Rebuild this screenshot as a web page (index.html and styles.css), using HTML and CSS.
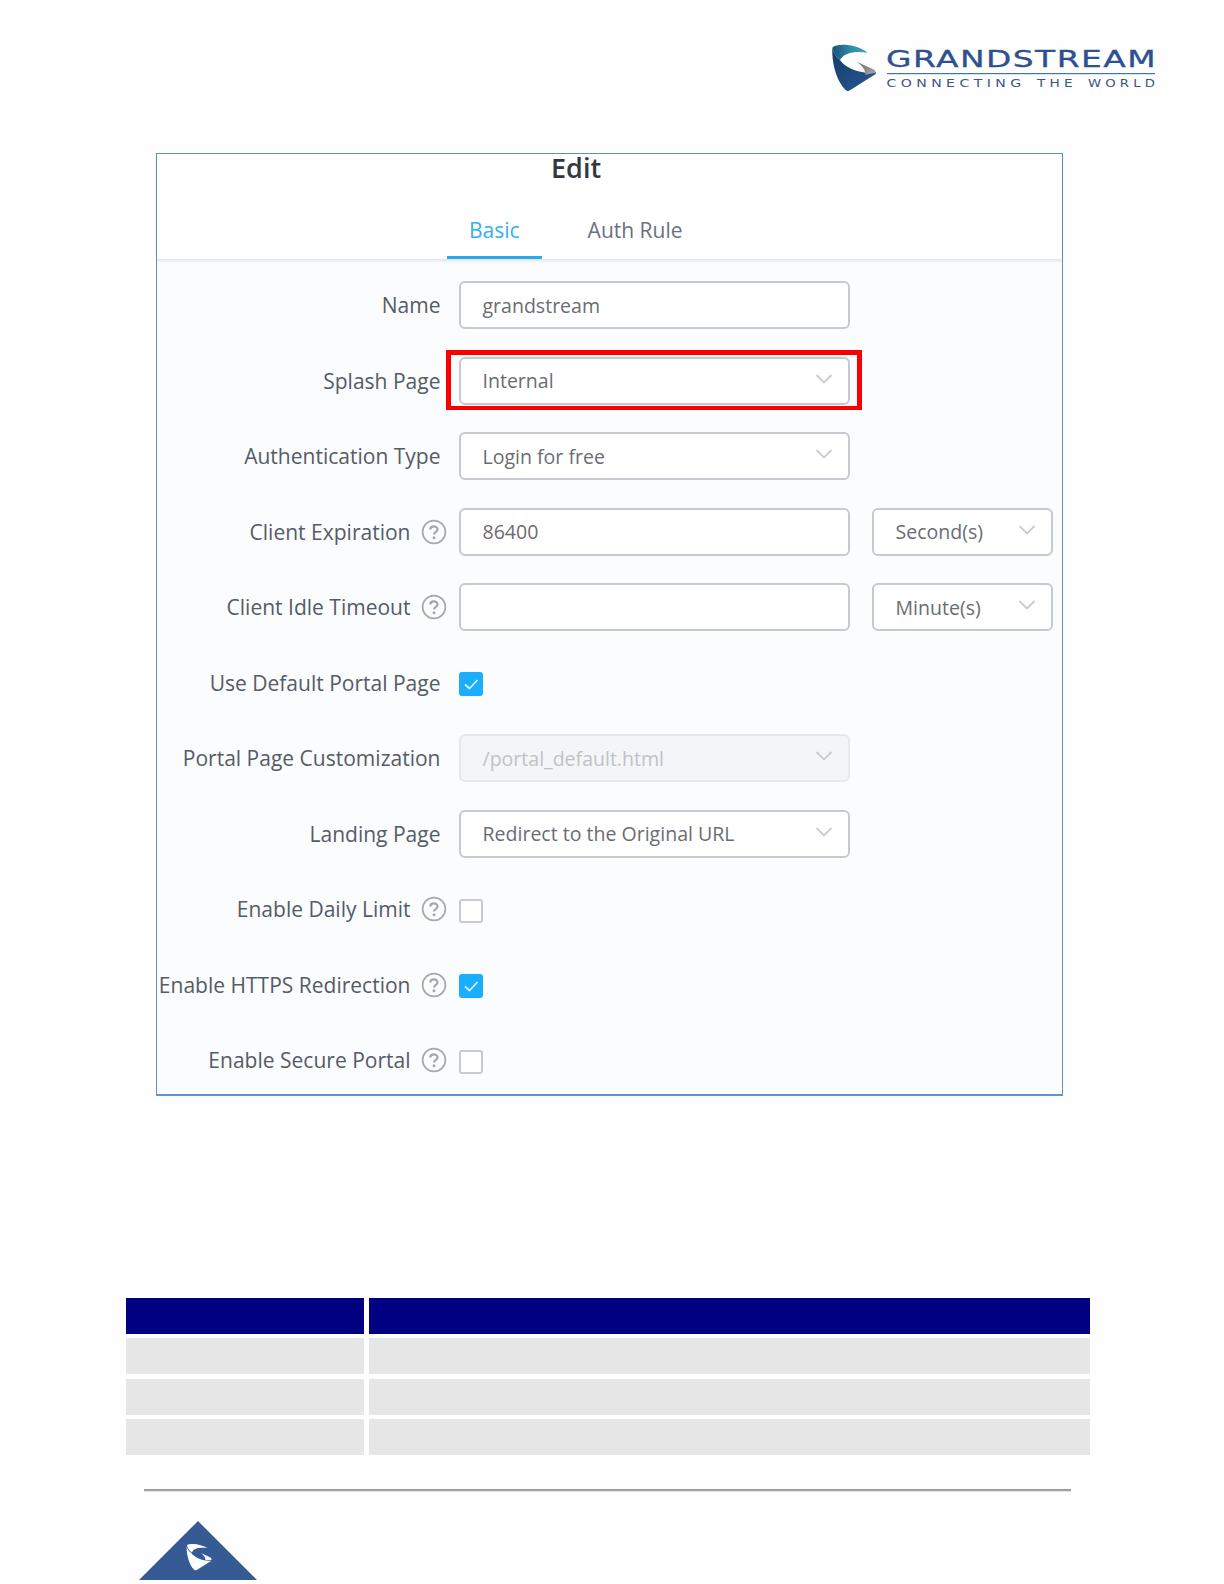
FILE: index.html
```html
<!DOCTYPE html>
<html lang="en">
<head>
  <meta charset="UTF-8" />
  <meta name="viewport" content="width=device-width, initial-scale=1.0"/>
  <title>Grandstream - Edit Portal Policy</title>
  <link rel="stylesheet" href="styles.css">
</head>
<body>
  <!-- shared icons -->
  <svg class="defs" width="0" height="0">
    <symbol id="chevron" viewBox="0 0 18 10">
      <path d="M1.5 1L9 8.5L16.5 1" fill="none" stroke="currentColor" stroke-width="1.8"/>
    </symbol>
    <symbol id="check" viewBox="0 0 24 24">
      <path d="M6 12.5L10.5 16.5L18.5 8" fill="none" stroke="currentColor" stroke-width="1.7"/>
    </symbol>
    <symbol id="help" viewBox="0 0 26 26">
      <circle cx="13" cy="13" r="11.4" fill="none" stroke="currentColor" stroke-width="1.7"/>
      <path d="M9.3 10.6C9.3 6.4 16.5 6.4 16.5 10.4C16.5 13 13 12.7 13 15.6" fill="none" stroke="currentColor" stroke-width="2.3"/>
      <circle cx="13" cy="18.7" r="1.5" fill="currentColor"/>
    </symbol>
  </svg>

  <header class="page-header">
    <svg class="logo" width="370" height="80" viewBox="0 0 370 80">
      <defs>
        <linearGradient id="teal" x1="0" y1="0" x2="1" y2="0">
          <stop offset="0" stop-color="#1f4f7c"/>
          <stop offset="0.5" stop-color="#2b8ba6"/>
          <stop offset="1" stop-color="#3fa9bb"/>
        </linearGradient>
        <linearGradient id="blue" x1="0" y1="0" x2="1" y2="1">
          <stop offset="0" stop-color="#163a66"/>
          <stop offset="1" stop-color="#265a97"/>
        </linearGradient>
        <linearGradient id="gray" x1="0" y1="0" x2="1" y2="1">
          <stop offset="0" stop-color="#666"/>
          <stop offset="1" stop-color="#aaa"/>
        </linearGradient>
      </defs>
      <g transform="scale(0.3333)">
        <path d="M67 53C82 38 142 43 173 68C134 62 101 69 90 90C78 80 70 68 67 53Z" fill="url(#teal)"/>
        <path d="M67 53C65 105 83 160 110 182Q115 184 121 180L196 133Q200 129 197 126C160 134 108 117 90 90C78 80 70 68 67 53Z" fill="url(#blue)"/>
        <path d="M140 95L193 119Q199 124 196 128L166 134C166 117 154 104 140 95Z" fill="url(#gray)"/>
      </g>
      <text class="brand" x="76" y="36.5" textLength="271" lengthAdjust="spacingAndGlyphs">GRANDSTREAM</text>
      <rect x="77" y="43" width="268" height="1.2" fill="#40779f"/>
      <g class="tagline">
        <text x="76.5" y="57" textLength="139" lengthAdjust="spacingAndGlyphs">CONNECTING</text>
        <text x="227" y="57" textLength="40" lengthAdjust="spacingAndGlyphs">THE</text>
        <text x="278" y="57" textLength="71" lengthAdjust="spacingAndGlyphs">WORLD</text>
      </g>
    </svg>
  </header>

  <main class="panel">
    <div class="panel-head">
      <h1>Edit</h1>
      <nav class="tabs">
        <a class="tab active">Basic</a>
        <a class="tab">Auth Rule</a>
      </nav>
    </div>

    <form class="form">
      <div class="row">
        <label>Name</label>
        <div class="field">grandstream</div>
      </div>
      <div class="row">
        <label>Splash Page</label>
        <div class="field highlight">Internal <svg class="chevron"><use href="#chevron"/></svg></div>
      </div>
      <div class="row">
        <label>Authentication Type</label>
        <div class="field">Login for free <svg class="chevron"><use href="#chevron"/></svg></div>
      </div>
      <div class="row">
        <label>Client Expiration <svg class="help"><use href="#help"/></svg></label>
        <div class="field">86400</div>
        <div class="field unit">Second(s) <svg class="chevron"><use href="#chevron"/></svg></div>
      </div>
      <div class="row">
        <label>Client Idle Timeout <svg class="help"><use href="#help"/></svg></label>
        <div class="field"></div>
        <div class="field unit">Minute(s) <svg class="chevron"><use href="#chevron"/></svg></div>
      </div>
      <div class="row">
        <label>Use Default Portal Page</label>
        <span class="checkbox checked"><svg><use href="#check"/></svg></span>
      </div>
      <div class="row">
        <label>Portal Page Customization</label>
        <div class="field disabled">/portal_default.html <svg class="chevron"><use href="#chevron"/></svg></div>
      </div>
      <div class="row">
        <label>Landing Page</label>
        <div class="field">Redirect to the Original URL <svg class="chevron"><use href="#chevron"/></svg></div>
      </div>
      <div class="row">
        <label>Enable Daily Limit <svg class="help"><use href="#help"/></svg></label>
        <span class="checkbox"></span>
      </div>
      <div class="row">
        <label>Enable HTTPS Redirection <svg class="help"><use href="#help"/></svg></label>
        <span class="checkbox checked"><svg><use href="#check"/></svg></span>
      </div>
      <div class="row">
        <label>Enable Secure Portal <svg class="help"><use href="#help"/></svg></label>
        <span class="checkbox"></span>
      </div>
    </form>
  </main>

  <div class="table">
    <div class="th"></div><div class="th"></div>
    <div class="td"></div><div class="td"></div>
    <div class="td"></div><div class="td"></div>
    <div class="td"></div><div class="td"></div>
  </div>

  <footer class="page-footer">
    <svg class="badge" width="118" height="59" viewBox="0 0 118 59">
      <path d="M59 0L118 59H0Z" fill="#365b94"/>
      <path d="M48 24C53 21.5 63 23.5 68.5 27C61 26 54 27 53 31.5C50 29.5 48.5 27 48 24Z" fill="#fff"/>
      <path d="M47.6 25.5C47.5 34 50 44 55.5 49Q57 49.6 58.5 48.5L72 40C64 40.5 55 36 52.3 32C49.5 30 48.2 28 47.6 25.5Z" fill="#fff"/>
      <path d="M62 32L71.5 36.5Q73.5 38 72 39.3L66.5 39.3C66.5 36 64.5 34 62 32Z" fill="#fff"/>
    </svg>
  </footer>
</body>
</html>
```
FILE: styles.css
```css
:root {
  --accent: #1baefc;
  --field-border: #c6c9d0;
  --label-color: #565b66;
  --field-color: #6a6d73;
  --panel-border: #5b95bd;
}

* {
  box-sizing: border-box;
}

body {
  margin: 0;
  height: 1584px;
  background: #fefefe;
  font-family: "Open Sans", sans-serif;
  display: flex;
  flex-direction: column;
  overflow: hidden;
}

.defs {
  position: absolute;
}

.page-header {
  height: 153px;
  padding: 30px 0 0 810px;
}

.logo {
  display: block;
}

.brand {
  font-family: "DejaVu Sans", sans-serif;
  font-size: 22.5px;
  letter-spacing: 1px;
  fill: #2d5190;
  stroke: #2d5190;
  stroke-width: 0.3px;
}

.tagline {
  font-family: "DejaVu Sans", sans-serif;
  font-size: 9.6px;
  letter-spacing: 3px;
  fill: #3c5580;
}

.panel {
  width: 907px;
  height: 943px;
  margin-left: 156px;
  border: 1px solid var(--panel-border);
  border-bottom: 2px solid #5f97cc;
  background: #fafcfe;
}

.panel-head {
  height: 106px;
  background: #fff;
  border-bottom: 1px solid #e3e5e9;
  box-shadow: 0 1px 3px rgba(0, 0, 0, 0.1);
}

h1 {
  margin: 0;
  padding-left: 394px;
  height: 49px;
  font-size: 27px;
  font-weight: 600;
  line-height: 28px;
  color: #333840;
}

.tabs {
  display: flex;
  gap: 24px;
  padding-left: 290px;
}

.tab {
  height: 56px;
  padding: 0 22px;
  font-size: 21px;
  line-height: 54px;
  color: #6b7080;
}

.tab.active {
  color: #35aef2;
  border-bottom: 3px solid #29aaec;
}

.form {
  padding-top: 7.6px;
}

.row {
  height: 75.5px;
  display: flex;
  align-items: center;
}

label {
  width: 283.5px;
  margin-right: 18.5px;
  display: flex;
  align-items: center;
  justify-content: flex-end;
  flex-shrink: 0;
  font-size: 21.02px;
  line-height: 30px;
  white-space: nowrap;
  color: var(--label-color);
}

.help {
  width: 26px;
  height: 26px;
  margin: 0 -6px 0 10px;
  color: #a6a8ab;
}

.field {
  position: relative;
  width: 391px;
  height: 48px;
  padding: 0 15px 0 21.5px;
  display: flex;
  align-items: center;
  justify-content: space-between;
  border: 2px solid var(--field-border);
  border-radius: 6px;
  background: #fff;
  font-size: 19.55px;
  white-space: nowrap;
  color: var(--field-color);
}

.field.unit {
  width: 181px;
  margin-left: 22px;
}

.field.disabled {
  background: #f4f5f8;
  border-color: #e6e8ec;
  color: #bfc2c8;
}

/* red marker around the splash page select */
.highlight::after {
  content: "";
  position: absolute;
  inset: -9px -14px -7px -15px;
  border: 5px solid #fb0000;
  border-bottom-width: 4px;
}

.chevron {
  width: 18px;
  height: 10px;
  margin-top: -4px;
  color: #c9cbd0;
}

.checkbox {
  width: 24px;
  height: 24px;
  margin-top: 3px;
  border: 2px solid #c8cacf;
  border-radius: 3px;
  background: #fff;
}

.checkbox.checked {
  border: none;
  background: var(--accent);
  color: #d8f1ff;
}

.checkbox svg {
  display: block;
  width: 24px;
  height: 24px;
}

.table {
  width: 964px;
  margin: 202px 0 0 126px;
  display: grid;
  grid-template-columns: 238px 721px;
  grid-auto-rows: 36px;
  gap: 4.4px 5px;
}

.th {
  background: #000080;
}

.td {
  background: #e6e6e6;
}

.page-footer {
  width: 927px;
  margin: 34px 0 0 144px;
  border-top: 2px solid #a0a0a0;
  box-shadow: inset 0 1px #e3e3e3;
}

.badge {
  display: block;
  margin: 30px 0 0 -5px;
}
```
